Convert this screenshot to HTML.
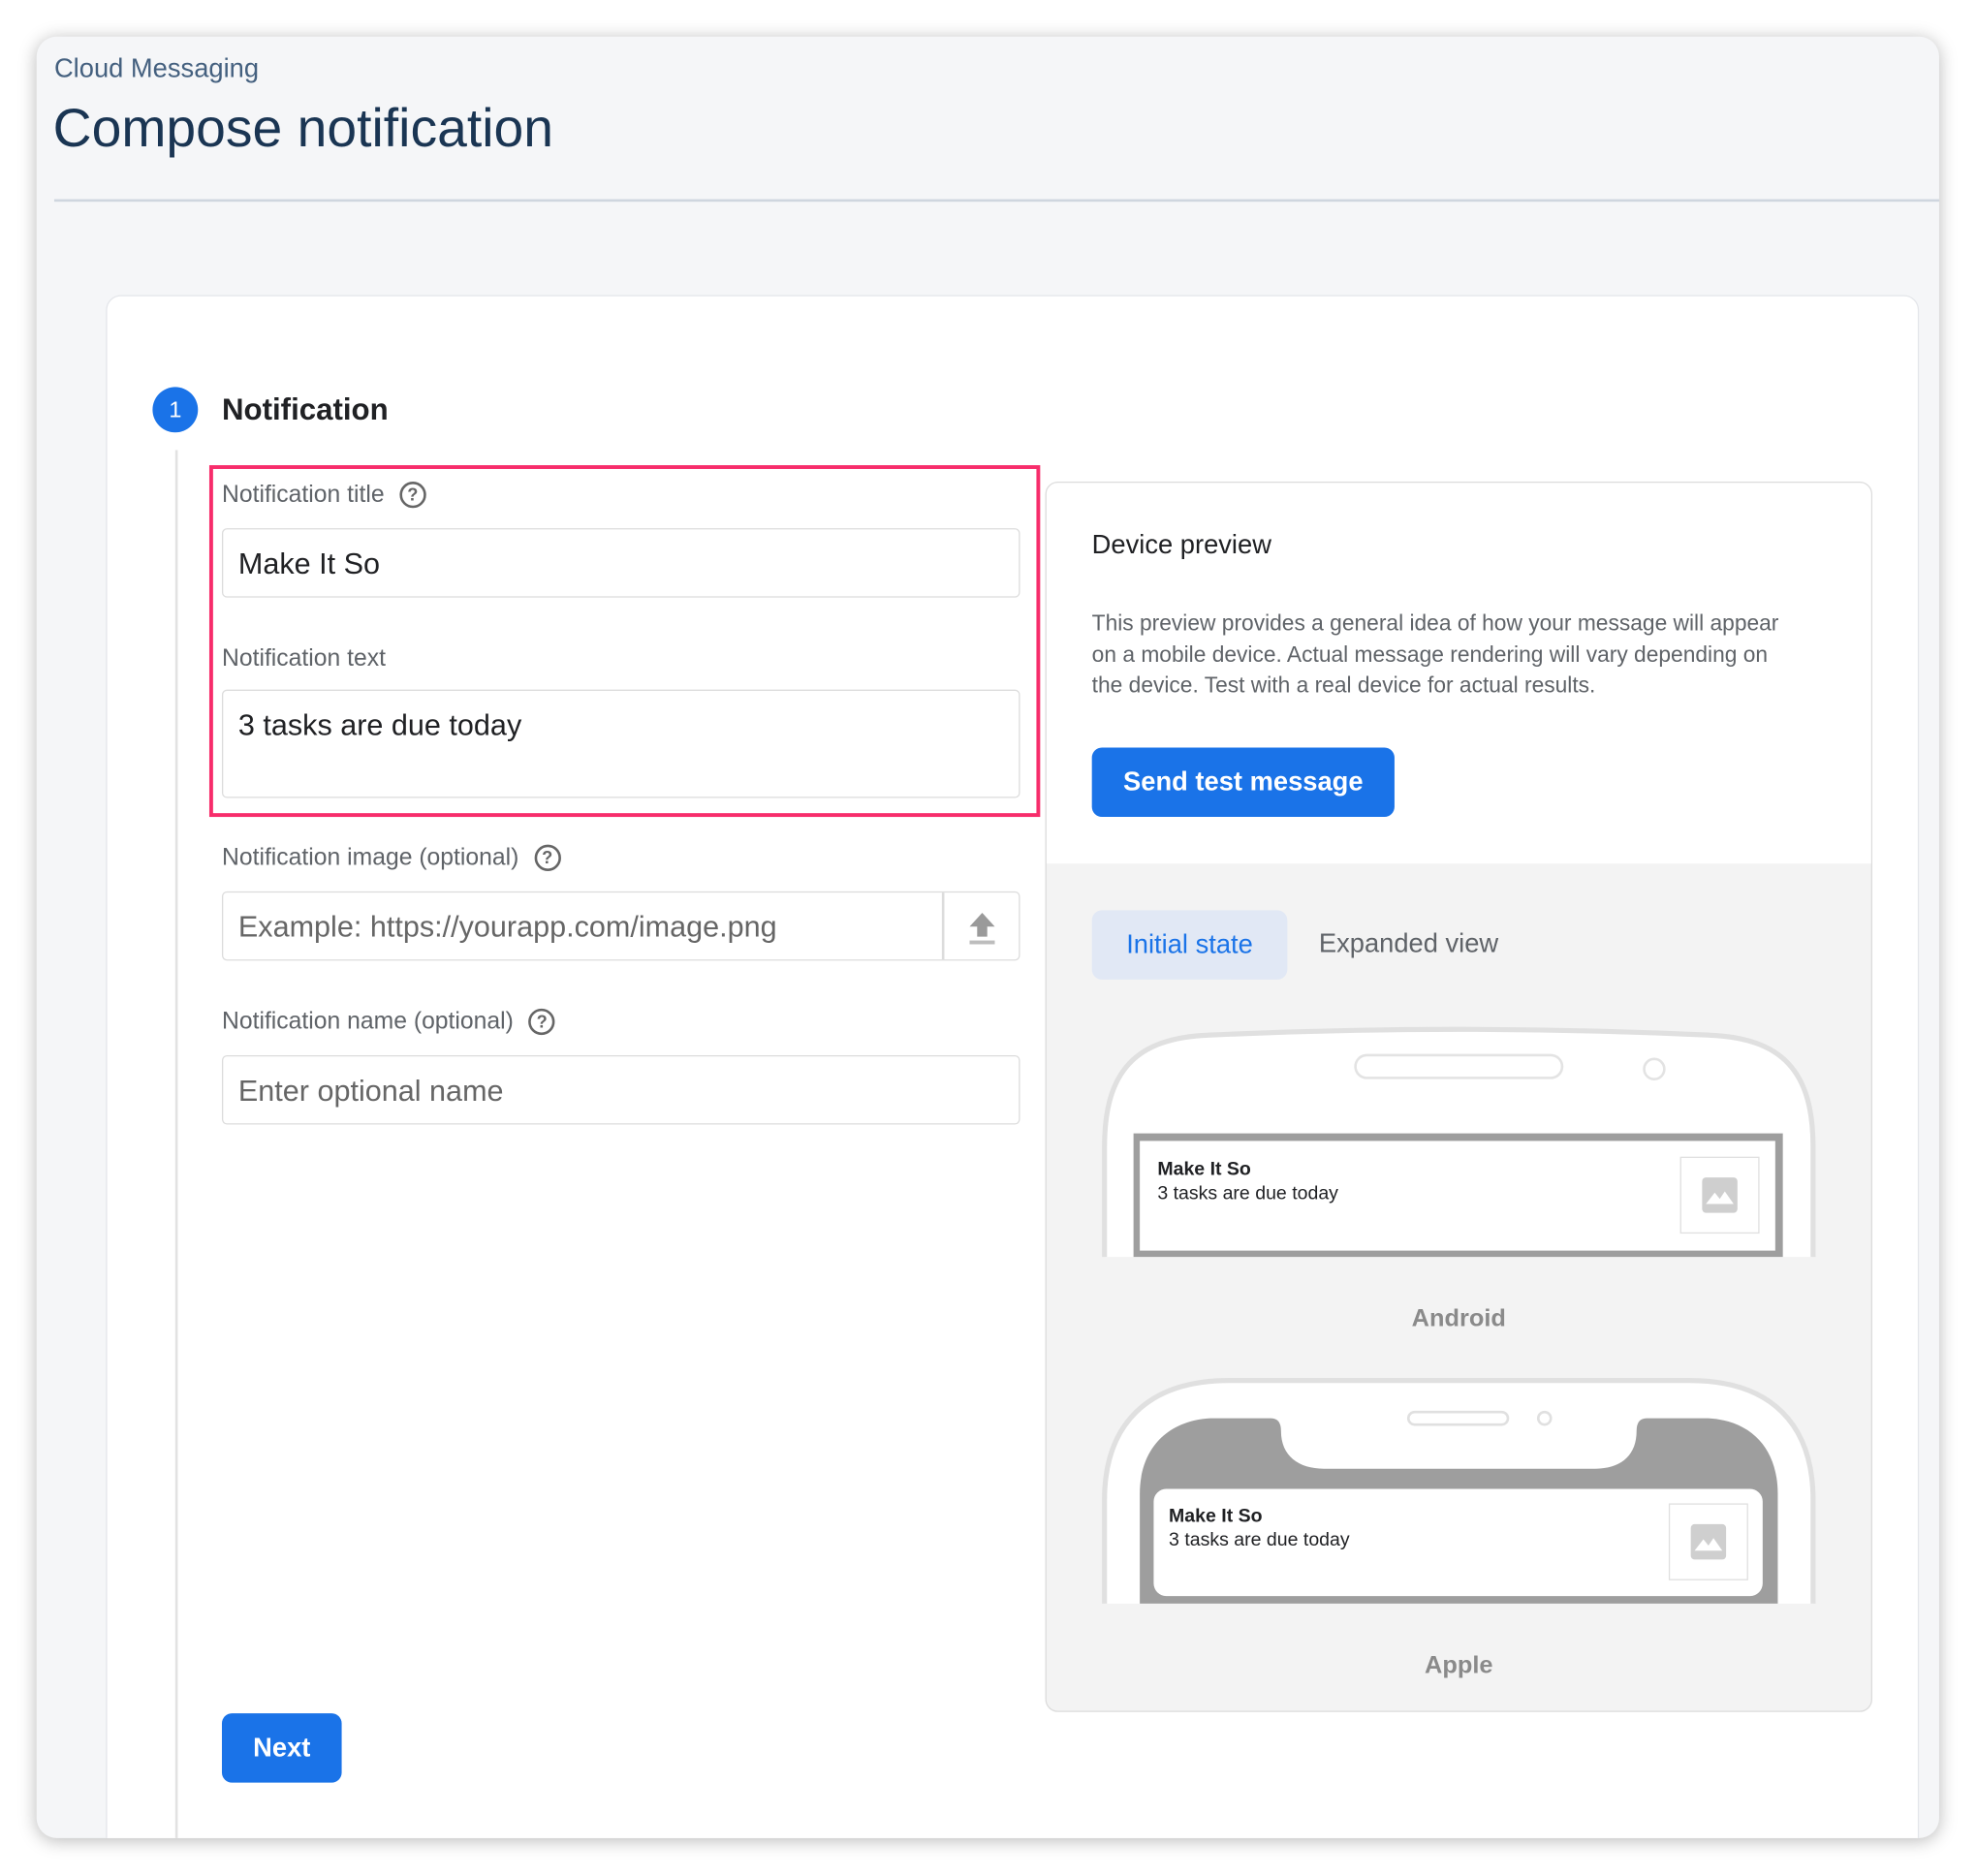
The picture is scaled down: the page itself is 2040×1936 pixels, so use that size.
<!DOCTYPE html>
<html><head><meta charset="utf-8"><style>
*{box-sizing:border-box;margin:0;padding:0}
html,body{width:2040px;height:1936px;overflow:hidden;background:#fff;font-family:"Liberation Sans",Arial,sans-serif}
#s{position:absolute;left:0;top:0;width:1568px;height:1488px;transform:scale(1.30102);transform-origin:0 0}
.a{position:absolute}
.outer{left:29px;top:29px;width:1509px;height:1429px;background:#f5f6f8;border-radius:16px;box-shadow:0 2px 14px rgba(0,0,0,.28);overflow:hidden}
.lbl{font-size:19px;color:#5f6368;line-height:22px}
.inp{border:1.5px solid #dcdcdc;border-radius:4px;background:#fff;font-size:23.5px;color:#202124;padding-left:12px}
.help{display:inline-block;width:21px;height:21px;border:2px solid #666;border-radius:50%;font-size:14px;font-weight:bold;color:#666;text-align:center;line-height:17px;vertical-align:middle;margin-left:12px}
.btn{background:#1a73e8;color:#fff;border-radius:8px;font-weight:bold;text-align:center}
</style></head><body><div id="s">
<div class="a outer">
 <div class="a" style="left:14px;top:14px;font-size:21px;color:#44607f">Cloud Messaging</div>
 <div class="a" style="left:13px;top:50px;font-size:42.5px;color:#1a3553">Compose notification</div>
 <div class="a" style="left:14px;top:129px;width:1500px;height:2px;background:#cfd6df"></div>
 <div class="a" style="left:55px;top:205px;width:1438px;height:1300px;background:#fff;border:1px solid #e4e6ea;border-radius:12px"></div>
</div>
<div class="a" style="left:121px;top:307px;width:36px;height:36px;border-radius:50%;background:#1a73e8;color:#fff;font-size:18px;text-align:center;line-height:36px">1</div>
<div class="a" style="left:176px;top:312px;font-size:24px;font-weight:bold;color:#202124">Notification</div>
<div class="a" style="left:139px;top:357px;width:2px;height:1101px;background:#e2e2e2"></div>
<div class="a" style="left:166px;top:369px;width:659px;height:279px;border:3px solid #f72d6b"></div>
<div class="a lbl" style="left:176px;top:382px">Notification title<span class="help">?</span></div>
<div class="a inp" style="left:176px;top:419px;width:633px;height:55px;line-height:54px">Make It So</div>
<div class="a lbl" style="left:176px;top:512px">Notification text</div>
<div class="a inp" style="left:176px;top:547px;width:633px;height:86px;padding-top:11px;line-height:32px">3 tasks are due today</div>
<div class="a lbl" style="left:176px;top:670px">Notification image (optional)<span class="help">?</span></div>
<div class="a inp" style="left:176px;top:707px;width:633px;height:55px;line-height:54px;color:#666">Example: https://yourapp.com/image.png</div>
<div class="a" style="left:747px;top:708px;width:2px;height:53px;background:#dcdcdc"></div>
<svg class="a" style="left:766px;top:722px" width="26" height="28" viewBox="0 0 26 28"><path d="M13 2 L23 13 H17 V21 H9 V13 H3 Z" fill="#9a9a9a"/><rect x="3" y="24" width="20" height="3" fill="#bdbdbd"/></svg>
<div class="a lbl" style="left:176px;top:800px">Notification name (optional)<span class="help">?</span></div>
<div class="a inp" style="left:176px;top:837px;width:633px;height:55px;line-height:54px;color:#666">Enter optional name</div>
<div class="a btn" style="left:176px;top:1359px;width:95px;height:55px;line-height:55px;font-size:21px">Next</div>

<div class="a" style="left:829px;top:382px;width:656px;height:976px;border:1.5px solid #dcdcdc;border-radius:10px;background:#f3f3f3;overflow:hidden">
 <div class="a" style="left:0;top:0;width:656px;height:302px;background:#fff"></div>
</div>
<div class="a" style="left:866px;top:421px;font-size:21px;color:#202124">Device preview</div>
<div class="a" style="left:866px;top:482px;width:560px;font-size:17.5px;line-height:24.5px;color:#5f6368">This preview provides a general idea of how your message will appear on a mobile device. Actual message rendering will vary depending on the device. Test with a real device for actual results.</div>
<div class="a btn" style="left:866px;top:593px;width:240px;height:55px;line-height:55px;font-size:21px">Send test message</div>
<div class="a" style="left:866px;top:722px;width:155px;height:55px;border-radius:8px;background:#e1e8f5;color:#1a73e8;font-size:21px;text-align:center;line-height:55px">Initial state</div>
<div class="a" style="left:1046px;top:737px;font-size:21px;color:#5f6368">Expanded view</div>

<svg class="a" style="left:0;top:0" width="1568" height="1488">
 <path d="M876 997 V910 C876 850 900 823 960 821 Q1157 812 1354 821 C1414 823 1438 850 1438 910 V997 Z" fill="#fff"/>
 <path d="M876 997 V910 C876 850 900 823 960 821 Q1157 812 1354 821 C1414 823 1438 850 1438 910 V997" fill="none" stroke="#e0e0e0" stroke-width="4"/>
 <rect x="1075" y="837" width="164" height="18" rx="9" fill="#fff" stroke="#e3e3e3" stroke-width="2"/>
 <circle cx="1312" cy="848" r="8" fill="#fff" stroke="#e3e3e3" stroke-width="2"/>
 <rect x="899" y="899" width="515" height="98" fill="#9e9e9e"/>
 <rect x="904" y="905" width="504" height="87" fill="#fff"/>
 <rect x="1333" y="918" width="62" height="60" fill="#fff" stroke="#e0e0e0" stroke-width="1"/>
 <rect x="1350" y="934" width="28" height="28" rx="3" fill="#cfcfcf"/>
 <path d="M1353 955 L1360 946 L1364 951 L1368 945 L1375 955 Z" fill="#fff"/>

 <path d="M876 1272 V1190 C876 1130 910 1095 975 1095 H1340 C1405 1095 1438 1130 1438 1190 V1272 Z" fill="#fff"/>
 <path d="M876 1272 V1190 C876 1130 910 1095 975 1095 H1340 C1405 1095 1438 1130 1438 1190 V1272" fill="none" stroke="#e0e0e0" stroke-width="4"/>
 <path d="M904 1272 V1185 C904 1150 925 1127 960 1125 H1008 Q1016 1125 1016 1135 C1016 1155 1030 1165 1050 1165 H1265 C1285 1165 1298 1155 1298 1135 Q1298 1125 1306 1125 H1355 C1390 1127 1410 1150 1410 1185 V1272 Z" fill="#9e9e9e"/>
 <rect x="1117" y="1120" width="79" height="10" rx="5" fill="#fff" stroke="#e0e0e0" stroke-width="2"/>
 <circle cx="1225" cy="1125" r="5" fill="#fff" stroke="#e0e0e0" stroke-width="2"/>
 <rect x="915" y="1181" width="483" height="85" rx="10" fill="#fff"/>
 <rect x="1324" y="1193" width="62" height="60" fill="#fff" stroke="#e0e0e0" stroke-width="1"/>
 <rect x="1341" y="1209" width="28" height="28" rx="3" fill="#cfcfcf"/>
 <path d="M1344 1230 L1351 1221 L1355 1226 L1359 1220 L1366 1230 Z" fill="#fff"/>
</svg>
<div class="a" style="left:918px;top:919px;font-size:15px;font-weight:bold;color:#202124">Make It So</div>
<div class="a" style="left:918px;top:938px;font-size:15px;color:#202124">3 tasks are due today</div>
<div class="a" style="left:927px;top:1194px;font-size:15px;font-weight:bold;color:#202124">Make It So</div>
<div class="a" style="left:927px;top:1213px;font-size:15px;color:#202124">3 tasks are due today</div>
<div class="a" style="left:1057px;top:1035px;width:200px;text-align:center;font-size:19.5px;font-weight:bold;color:#8a8a8a">Android</div>
<div class="a" style="left:1057px;top:1310px;width:200px;text-align:center;font-size:19.5px;font-weight:bold;color:#8a8a8a">Apple</div>
</div></body></html>
